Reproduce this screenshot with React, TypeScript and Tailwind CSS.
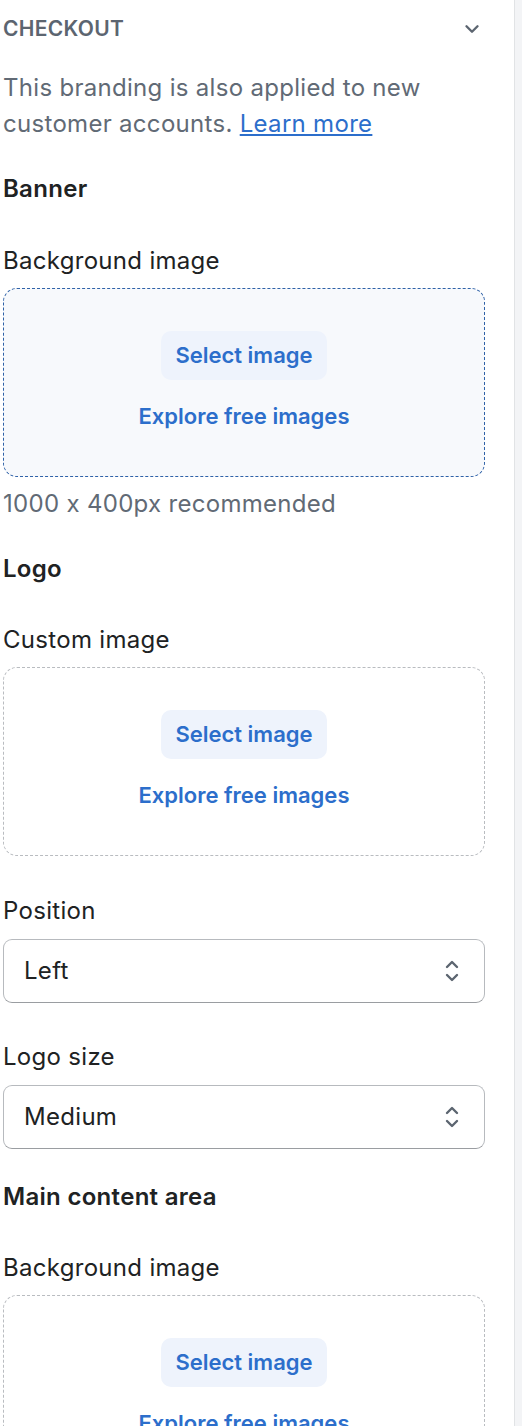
import { ChevronDown } from "lucide-react";

const font = { fontFamily: "Inter, 'Noto Sans', sans-serif" };

function UpDown() {
  return (
    <svg width="16" height="26" viewBox="0 0 16 26" fill="none" stroke="#5c6570" strokeWidth="2.4" strokeLinecap="round" strokeLinejoin="round">
      <path d="M3 9 L8 4 L13 9" />
      <path d="M3 17 L8 22 L13 17" />
    </svg>
  );
}

function Dropzone({ active }: { active?: boolean }) {
  return (
    <div
      className={
        "mt-[9px] h-[189px] rounded-[14px] border border-dashed flex flex-col items-center justify-center tracking-normal " +
        (active ? "border-[#2f62a8] bg-[#f7f9fc]" : "border-[#b9bcc0] bg-white")
      }
    >
      <button className="h-[49px] w-[166px] rounded-[10px] bg-[#eef3fc] text-[22px] font-semibold text-[#2c6ecb]">
        Select image
      </button>
      <div className="mt-[18px] leading-[36px] text-[22px] font-semibold text-[#2c6ecb]">Explore free images</div>
    </div>
  );
}

function Select({ value }: { value: string }) {
  return (
    <div className="mt-[10px] h-[64px] rounded-[9px] border border-[#b7babe] border-b-[#9a9da1] bg-white flex items-center justify-between pl-[20px] pr-[24px] text-[24px] tracking-[0.3px] text-[#202223]">
      <span>{value}</span>
      <UpDown />
    </div>
  );
}

export default function App() {
  return (
    <div className="flex w-[522px] min-h-[1426px] bg-white overflow-hidden [font-feature-settings:'calt'_0]" style={font}>
      <div className="w-[482px] ml-[3px] pt-[17px] text-[#202223] tracking-[0.3px]">
        <div className="flex items-center justify-between h-[24px]">
          <span className="text-[21px] font-semibold tracking-[0.3px] text-[#5c6570]">CHECKOUT</span>
          <ChevronDown className="mr-[2px]" size={22} color="#5c6570" strokeWidth={2.6} />
        </div>
        <p className="mt-[29px] text-[24px] leading-[36px] text-[#616a75]">
          This branding is also applied to new customer accounts.{" "}
          <a className="text-[#2c6ecb] underline underline-offset-[2px]" href="#">Learn more</a>
        </p>

        <div className="mt-[29px] text-[24px] leading-[36px] font-semibold">Banner</div>
        <div className="mt-[36px] text-[24px] leading-[36px]">Background image</div>
        <Dropzone active />
        <div className="mt-[9px] text-[24px] leading-[36px] text-[#616a75]">1000 x 400px recommended</div>

        <div className="mt-[29px] text-[24px] leading-[36px] font-semibold">Logo</div>
        <div className="mt-[35px] text-[24px] leading-[36px]">Custom image</div>
        <Dropzone />

        <div className="mt-[37px] text-[24px] leading-[36px]">Position</div>
        <Select value="Left" />
        <div className="mt-[36px] text-[24px] leading-[36px]">Logo size</div>
        <Select value="Medium" />

        <div className="mt-[30px] text-[24px] leading-[36px] font-semibold">Main content area</div>
        <div className="mt-[35px] text-[24px] leading-[36px]">Background image</div>
        <Dropzone />
      </div>
      <div className="ml-auto w-[8px] bg-[#f3f4f6] border-l border-[#e1e3e5]" />
    </div>
  );
}
